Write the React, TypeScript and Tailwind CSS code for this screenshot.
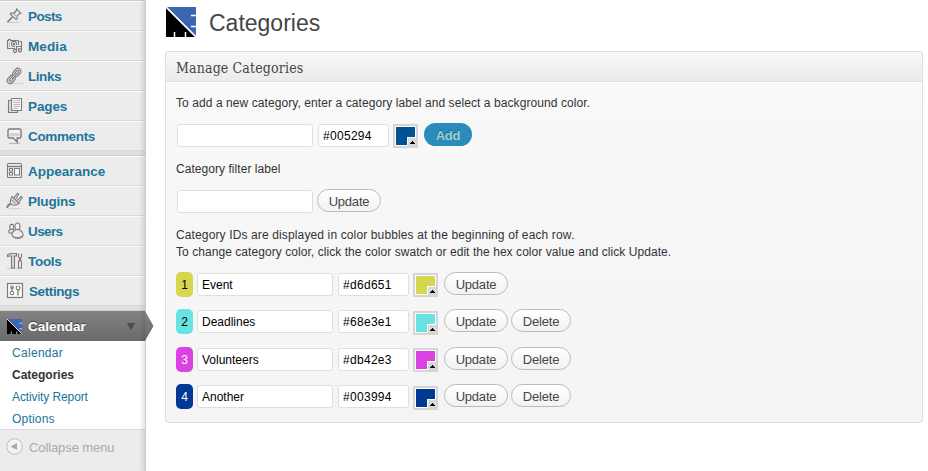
import React from 'react';

type Glyph = () => React.ReactElement;

function Icon({ children }: { children: React.ReactNode }) {
  return (
    <svg width="18" height="18" viewBox="0 0 18 18" fill="none" stroke="#7c7c7c" strokeWidth="1.1" className="shrink-0">
      {children}
    </svg>
  );
}

const Pin: Glyph = () => (
  <Icon>
    <path d="M1 15.500h13" stroke="#ccc" />
    <path d="M10.500 2 14.800 6.200l-1.500.6-2.300 2.400.2 2.600-1 .8L4.200 7l.8-1 2.600.1 2.500-2.400z" fill="#f0f0f0" />
    <path d="M10.500 4.500 8 7.200l2.500 2.300" stroke="#aaa" />
    <path d="M6.500 10 1.500 15" strokeWidth="1.7" />
  </Icon>
);
const Media: Glyph = () => (
  <Icon>
    <path d="M1.500 3.500h1v-1h2v1h8v8h-11z" fill="#e8e8e8" />
    <circle cx="8" cy="6.900" r="2.500" fill="#fff" />
    <circle cx="8" cy="6.900" r=".7" />
    <path d="M3.500 5v5" stroke="#bbb" />
    <path d="M10.500 14v-4.500h5V13" stroke="#ececec" strokeWidth="3" />
    <path d="M10.500 14V9.500h5V4.500h-2M15.500 13V9" />
    <circle cx="9" cy="14" r="1.600" fill="#ddd" />
    <circle cx="14" cy="13.500" r="1.600" fill="#ddd" />
  </Icon>
);
const Chain: Glyph = () => (
  <Icon>
    <path d="M3 16.500h14" stroke="#d2d2d2" />
    <g transform="rotate(-48 8 9)">
      <rect x="-1" y="6.200" width="9" height="6" rx="3" fill="#d8d8d8" />
      <rect x="1.300" y="8.200" width="4.500" height="2" rx="1" fill="#fff" />
      <rect x="8" y="5.700" width="9" height="6" rx="3" fill="#d8d8d8" />
      <rect x="10.300" y="7.700" width="4.500" height="2" rx="1" fill="#fff" />
      <path d="M5 9h6.500" strokeWidth="2.2" />
      <path d="M5.500 9h5.500" stroke="#e5e5e5" strokeWidth=".8" />
    </g>
  </Icon>
);
const Pages: Glyph = () => (
  <Icon>
    <path d="M5 3.500H2.500v12h9V14" fill="#ddd" />
    <path d="M5.500 1.500h10v12h-10z" fill="#f5f5f5" />
    <path d="M7.500 3.500h2M10.500 3.500h3.500M7.500 5.500h6.500M7.500 7.500h6.500M7.500 9.500h6.500M7.500 11.500h4" stroke="#b8b8b8" />
  </Icon>
);
const Bubble: Glyph = () => (
  <Icon>
    <path d="M3 16.500h11" stroke="#bbb" />
    <path d="M3.500 2h10q1.500 0 1.500 1.500v6q0 1.500-1.500 1.500h-2.300v4l-4-4H3.500Q2 11 2 9.500v-6Q2 2 3.500 2z" fill="#f4f4f4" strokeWidth="1.400" />
    <path d="M3.500 6h10v3.500h-10z" fill="#d3d3d3" stroke="none" />
  </Icon>
);
const Layout: Glyph = () => (
  <Icon>
    <rect x="1.500" y="1.500" width="14" height="14" rx="1" fill="#f0f0f0" />
    <path d="M2 4.500h13" strokeWidth="1.400" />
    <path d="M3.500 6.500h3v2.500h-3zM3.500 10.500h3v2.500h-3zM8.500 6.500h5v6.500h-5z" fill="#fff" />
  </Icon>
);
const Plug: Glyph = () => (
  <Icon>
    <path d="M3 16.500h11" stroke="#d2d2d2" />
    <path d="M1 15.800q.8-3 3.600-4" strokeWidth="2" />
    <path d="M6 4.500 13.500 11q-4.500 3.500-8 1.500Q3 9.500 6 4.500z" fill="#e6e6e6" />
    <path d="M5.700 8l3.800 3.500M7 6l5 4.700" stroke="#999" />
    <path d="m8 5.800 3.500-4.500 1.200 1-3 4.500M11.300 8.500l3.800-4 1.200 1.100-3.500 4.500" fill="#fff" />
  </Icon>
);
const Users: Glyph = () => (
  <Icon>
    <ellipse cx="5.800" cy="5" rx="2" ry="2.600" fill="#eee" />
    <path d="M8 11H3.200q-1.500-2.700 1.300-3.500h3.500" fill="#e5e5e5" />
    <ellipse cx="11.500" cy="4.500" rx="2.500" ry="3.500" fill="#f3f3f3" />
    <path d="M9 8q2.700-1.200 5 0 3.300 2.600 3.300 5.200-1.500 2.800-5.800 2.800-4 0-5.500-2.800-.3-3 3-5.200z" fill="#ebebeb" />
    <path d="M7 14.500q4.500 3 9.500 0" stroke="#888" strokeWidth="1.500" />
  </Icon>
);
const Tools: Glyph = () => (
  <Icon>
    <path d="M1 16.500h15" stroke="#ccc" />
    <path d="M1.500 4.500V3L4 1.500h6.500V4H8.500v12h-3V4H3.500z" fill="#d8d8d8" />
    <path d="M12.500 1.500V5l1 1v3h-1v7h3V9h-1V6l1-1V1.500" fill="#eee" />
  </Icon>
);
const Sliders: Glyph = () => (
  <Icon>
    <rect x="1.500" y="1.500" width="15" height="14" fill="#f8f8f8" strokeWidth="1.200" />
    <circle cx="6" cy="11" r="1.700" fill="#fff" />
    <path d="M5 3.500v2.500h2V3.500M6 6v3M12 8v5.500" strokeWidth="1.300" />
    <circle cx="12" cy="6" r="1.900" fill="#fff" />
    <path d="M12 3v3" stroke="#f8f8f8" strokeWidth="1.200" />
  </Icon>
);

function Logo({ size }: { size: number }) {
  return (
    <svg width={size} height={size} viewBox="0 0 30 30" className="block shrink-0">
      <path d="M0 0h30v30H0z" fill="#000" />
      <path d="M0 0h30v30z" fill="#3c66b2" />
      <path d="m0 0 30 30" stroke="#fff" strokeWidth="1.700" />
      <path d="M8.500 30v-5M19.500 30v-5M25 8.500h5M25 19.500h5" stroke="#fff" strokeWidth="1.500" />
    </svg>
  );
}

const mainMenu: [string, Glyph, string][] = [
  ['Posts', Pin, 'tracking-[-0.6px]'],
  ['Media', Media, 'tracking-[0.1px]'],
  ['Links', Chain, 'tracking-[-0.45px]'],
  ['Pages', Pages, 'tracking-[-0.1px]'],
  ['Comments', Bubble, 'tracking-[-0.35px]'],
];
const adminMenu: [string, Glyph, string][] = [
  ['Appearance', Layout, 'tracking-[0px]'],
  ['Plugins', Plug, 'tracking-[-0.2px]'],
  ['Users', Users, 'tracking-[-0.6px]'],
  ['Tools', Tools, 'tracking-[-0.3px]'],
  ['Settings', Sliders, 'tracking-[-0.4px]'],
];

function MenuRow({ label, Glyph, spacing }: { label: string; Glyph: Glyph; spacing: string }) {
  return (
    <div className="flex h-[30px] items-center border-t border-b border-t-[#f9f9f9] border-b-[#dadada] pl-[6px]">
      <Glyph />
      <span className={`${label === 'Settings' ? 'ml-[5px]' : 'ml-[4px]'} ${spacing} pt-px text-[13.5px] leading-[18px] font-bold text-[#21759b]`}>{label}</span>
    </div>
  );
}

function Separator() {
  return <div className="h-[5px] border-b border-[#cfcfcf] bg-[#dfdfdf]" />;
}

function Sidebar() {
  return (
    <nav className="relative h-[471px] w-[146px] shrink-0 border-r border-[#ccc] bg-[#ececec]">
      <div className="h-px bg-[#ccc]" />
      {mainMenu.map(([label, G, spacing]) => <MenuRow key={label} label={label} Glyph={G} spacing={spacing} />)}
      <Separator />
      {adminMenu.map(([label, G, spacing]) => <MenuRow key={label} label={label} Glyph={G} spacing={spacing} />)}
      <Separator />
      <div className="flex h-[30px] items-center bg-linear-to-b from-[#828282] to-[#6a6a6a] pl-[7px]">
        <div className="pt-px"><Logo size={15} /></div>
        <span className="ml-[6px] flex-1 pt-px text-[13.5px] leading-[18px] font-bold tracking-[0px] text-white [text-shadow:0_-1px_0_#444]">Calendar</span>
        <svg width="8" height="7" viewBox="0 0 8 7" className="mr-[10px]"><path d="M0 0h8L4 7z" fill="#4c4c4c" /></svg>
      </div>
      <div className="flex h-[88px] flex-col bg-white pt-px pl-3 text-[12px] leading-[22px] text-[#21759b]">
        <span className="tracking-[0.3px]">Calendar</span>
        <span className="font-bold text-[#333]">Categories</span>
        <span className="tracking-[-0.1px]">Activity Report</span>
        <span className="tracking-[0.2px]">Options</span>
      </div>
      <div className="flex items-start border-t border-[#dadada] pt-[8px] pl-[6px] text-[#aaa]">
        <svg width="17" height="17" viewBox="0 0 17 17">
          <circle cx="8.500" cy="8.500" r="7.800" fill="#f4f4f4" stroke="#bbb" />
          <path d="M11 5v7L4.500 8.500z" fill="#aaa" />
        </svg>
        <span className="ml-[6px] pt-px text-[13px] leading-[18px] tracking-[-0.1px]">Collapse menu</span>
      </div>
      <div className="pointer-events-none absolute inset-y-0 right-0 w-[6px] bg-linear-to-r from-transparent to-black/10" />
      <svg width="9" height="30" viewBox="0 0 9 30" className="absolute top-[311px] left-[145px]">
        <defs>
          <linearGradient id="arrow" x2="0" y2="1"><stop stopColor="#828282" /><stop offset="1" stopColor="#6a6a6a" /></linearGradient>
        </defs>
        <path d="M0 0 8.500 15 0 30z" fill="url(#arrow)" />
      </svg>
    </nav>
  );
}

function Field({ value = '', short = false }: { value?: string; short?: boolean }) {
  return (
    <input
      defaultValue={value}
      aria-label="field"
      className={`${short ? 'ml-[5px] w-[71px] tracking-[0.3px]' : 'w-[136px]'} mt-px block h-[23px] rounded-[3px] border border-[#dfdfdf] bg-white px-1 text-[12px] text-black outline-none`}
    />
  );
}

function Swatch({ color }: { color: string }) {
  return (
    <div className="relative mt-px ml-1 h-[24px] w-[25px] border-2 border-[#d5d5d5] bg-white p-px">
      <div className="h-full w-full" style={{ backgroundColor: color }} />
      <span className="absolute right-0 bottom-0 flex h-[9px] w-[9px] items-end justify-end border-t border-l border-white bg-[#d8d8d8] pr-px pb-[2px]">
        <svg width="5" height="3" viewBox="0 0 5 3"><path d="M0 3V2h1V1h1V0h1v1h1v1h1v1z" fill="#000" /></svg>
      </span>
    </div>
  );
}

function Button({ label, className }: { label: string; className: string }) {
  return (
    <button className={`${className} h-[23px] rounded-full border border-[#bbb] bg-linear-to-b from-white to-[#f2f2f2] pt-[2px] text-[13px] leading-[19px] tracking-[-0.2px] text-[#464646]`}>
      {label}
    </button>
  );
}

const categories = [
  { id: 1, name: 'Event', color: '#d6d651', text: '#000000', gap: 'h-[37px]', shift: 'pt-0' },
  { id: 2, name: 'Deadlines', color: '#68e3e1', text: '#000000', gap: 'h-[38px]', shift: 'pt-px' },
  { id: 3, name: 'Volunteers', color: '#db42e3', text: '#ffffff', gap: 'h-[37px]', shift: 'pt-0' },
  { id: 4, name: 'Another', color: '#003994', text: '#ffffff', gap: 'h-[38px]', shift: 'pt-px' },
];

export default function App() {
  return (
    <div className="flex h-[471px] w-[928px] overflow-hidden bg-white font-['Liberation_Sans',Arial,sans-serif] text-[#333]">
      <Sidebar />
      <main className="flex-1 pt-[7px] pl-[19px]">
        <header className="flex h-[44px] items-start pl-px">
          <Logo size={30} />
          <h1 className="ml-[13px] pt-px text-[23px] leading-[31px] text-[#464646]">Categories</h1>
        </header>
        <section className="h-[372px] w-[758px] rounded-[3px] border border-[#dfdfdf] bg-linear-to-b from-[#f9f9f9] to-[#f4f4f4]">
          <h2 className="flex h-[30px] items-center rounded-t-[2px] border-b border-[#dfdfdf] bg-linear-to-b from-[#f8f8f8] to-[#ebebeb] pt-[3px] pl-[10px] font-['DejaVu_Serif_Condensed','DejaVu_Serif',serif] [font-stretch:condensed] text-[14px] tracking-[0.15px] text-[#464646] shadow-[0_1px_0_#fff]">
            Manage Categories
          </h2>
          <div className="pl-[10px] text-[12px]">
            <p className="pt-[12px] leading-[18px] tracking-[0.08px]">To add a new category, enter a category label and select a background color.</p>
            <div className="mt-[11px] flex h-[25px] pl-px">
              <Field />
              <Field short value="#005294" />
              <Swatch color="#005294" />
              <button className="ml-[6px] h-[23px] w-[48px] rounded-full bg-[#298cba] pt-[2px] text-[13px] font-bold tracking-[-0.2px] text-[#9fd0d5] [text-shadow:0_-1px_0_#1b607f]">Add</button>
            </div>
            <p className="mt-[12px] leading-[18px] tracking-[0.05px]">Category filter label</p>
            <div className="mt-[11px] flex h-[25px] pl-px">
              <Field />
              <Button label="Update" className="ml-1 w-[64px]" />
            </div>
            <div className="mt-[13px] leading-[17px]">
              <p className="tracking-[0.13px]">Category IDs are displayed in color bubbles at the beginning of each row.</p>
              <p className="tracking-[0.06px]">To change category color, click the color swatch or edit the hex color value and click Update.</p>
            </div>
            <div className="mt-[11px]">
              {categories.map((c) => (
                <div key={c.id} className={`${c.gap} flex items-start`}>
                  <span className="mr-1 flex h-[25px] w-[17px] items-center justify-center rounded-[5px]" style={{ backgroundColor: c.color, color: c.text }}>{c.id}</span>
                  <Field value={c.name} />
                  <Field short value={c.color} />
                  <div className={c.shift}><Swatch color={c.color} /></div>
                  <Button label="Update" className="ml-[6px] w-[64px]" />
                  {c.id > 1 && <Button label="Delete" className="ml-[3px] w-[60px]" />}
                </div>
              ))}
            </div>
          </div>
        </section>
      </main>
    </div>
  );
}
